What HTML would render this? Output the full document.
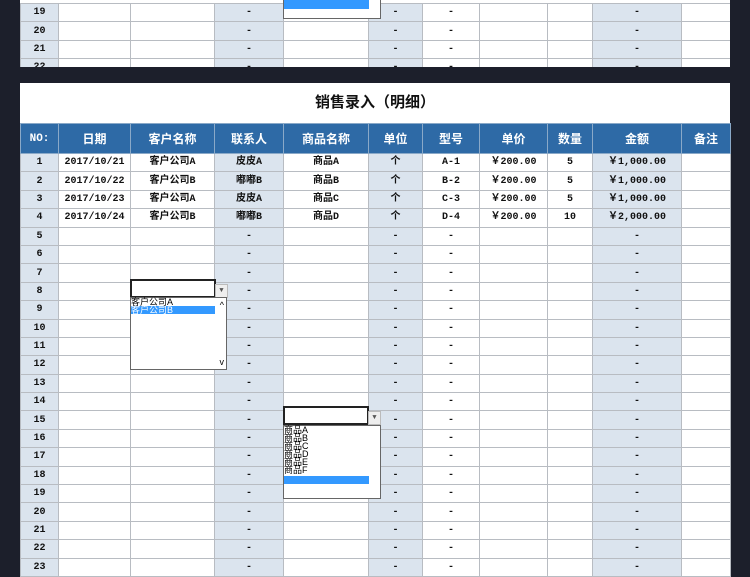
<!DOCTYPE html><html><head><meta charset="utf-8"><style>
body{margin:0;width:750px;height:563px;background:#1c1f2b;position:relative;overflow:hidden;font-family:"Liberation Mono","Noto Sans CJK SC",monospace;}
table{border-collapse:collapse;table-layout:fixed;position:absolute;left:20px;}
td{border:1px solid #b8bcc2;height:17.4px;padding:0;text-align:center;font-size:10px;font-weight:bold;color:#111;background:#fff;line-height:17px;white-space:nowrap;overflow:hidden}
td.b{background:#dbe4ee}
th{background:#2e6aa6;color:#fff;font-size:12px;font-weight:bold;height:27px;border:1px solid #8aa9c8;font-family:"Liberation Sans","Noto Sans CJK SC",sans-serif}
.p{position:absolute;left:20px;width:710px;background:#fff}
.dd{position:absolute;background:#fff;border:1px solid #666;font-family:"Liberation Sans","Noto Sans CJK SC",sans-serif;font-size:9px;line-height:8px}
.sel{position:absolute;border:2px solid #222;background:#fff}
.arr{position:absolute;width:11px;height:12px;background:#eee;border:1px solid #bbb;font-size:7px;text-align:center;color:#555;line-height:12px}
</style></head><body>
<div class="p" style="top:0;height:67px;overflow:hidden">
<table style="left:0;top:3px;width:710px">
<colgroup><col style="width:38px"><col style="width:72px"><col style="width:84px"><col style="width:69px"><col style="width:85px"><col style="width:54px"><col style="width:57px"><col style="width:68px"><col style="width:45px"><col style="width:89px"><col style="width:49px"></colgroup>
<tr><td class="b">19</td><td></td><td></td><td class="b">-</td><td></td><td class="b">-</td><td>-</td><td></td><td></td><td class="b">-</td><td></td></tr>
<tr><td class="b">20</td><td></td><td></td><td class="b">-</td><td></td><td class="b">-</td><td>-</td><td></td><td></td><td class="b">-</td><td></td></tr>
<tr><td class="b">21</td><td></td><td></td><td class="b">-</td><td></td><td class="b">-</td><td>-</td><td></td><td></td><td class="b">-</td><td></td></tr>
<tr><td class="b">22</td><td></td><td></td><td class="b">-</td><td></td><td class="b">-</td><td>-</td><td></td><td></td><td class="b">-</td><td></td></tr>
</table>
<div class="dd" style="left:263px;top:-2px;width:96px;height:19px"><div style="background:#3399ff;height:10px;width:85px"></div></div>
</div>
<div class="p" style="top:83px;height:480px">
<div style="position:absolute;top:8px;width:100%;text-align:center;font-size:15px;font-weight:bold;font-family:'Liberation Sans','Noto Sans CJK SC',sans-serif;color:#111">销售录入（明细）</div>
</div>
<table style="top:123px;width:710px">
<colgroup><col style="width:38px"><col style="width:72px"><col style="width:84px"><col style="width:69px"><col style="width:85px"><col style="width:54px"><col style="width:57px"><col style="width:68px"><col style="width:45px"><col style="width:89px"><col style="width:49px"></colgroup>
<tr><th style="font-family:'Liberation Mono',monospace;font-size:11px">NO:</th><th>日期</th><th>客户名称</th><th>联系人</th><th>商品名称</th><th>单位</th><th>型号</th><th>单价</th><th>数量</th><th>金额</th><th>备注</th></tr>
<tr><td class="b">1</td><td>2017/10/21</td><td>客户公司A</td><td class="b">皮皮A</td><td>商品A</td><td class="b">个</td><td>A-1</td><td>￥200.00</td><td>5</td><td class="b">￥1,000.00</td><td></td></tr>
<tr><td class="b">2</td><td>2017/10/22</td><td>客户公司B</td><td class="b">嘟嘟B</td><td>商品B</td><td class="b">个</td><td>B-2</td><td>￥200.00</td><td>5</td><td class="b">￥1,000.00</td><td></td></tr>
<tr><td class="b">3</td><td>2017/10/23</td><td>客户公司A</td><td class="b">皮皮A</td><td>商品C</td><td class="b">个</td><td>C-3</td><td>￥200.00</td><td>5</td><td class="b">￥1,000.00</td><td></td></tr>
<tr><td class="b">4</td><td>2017/10/24</td><td>客户公司B</td><td class="b">嘟嘟B</td><td>商品D</td><td class="b">个</td><td>D-4</td><td>￥200.00</td><td>10</td><td class="b">￥2,000.00</td><td></td></tr>
<tr><td class="b">5</td><td></td><td></td><td class="b">-</td><td></td><td class="b">-</td><td>-</td><td></td><td></td><td class="b">-</td><td></td></tr>
<tr><td class="b">6</td><td></td><td></td><td class="b">-</td><td></td><td class="b">-</td><td>-</td><td></td><td></td><td class="b">-</td><td></td></tr>
<tr><td class="b">7</td><td></td><td></td><td class="b">-</td><td></td><td class="b">-</td><td>-</td><td></td><td></td><td class="b">-</td><td></td></tr>
<tr><td class="b">8</td><td></td><td></td><td class="b">-</td><td></td><td class="b">-</td><td>-</td><td></td><td></td><td class="b">-</td><td></td></tr>
<tr><td class="b">9</td><td></td><td></td><td class="b">-</td><td></td><td class="b">-</td><td>-</td><td></td><td></td><td class="b">-</td><td></td></tr>
<tr><td class="b">10</td><td></td><td></td><td class="b">-</td><td></td><td class="b">-</td><td>-</td><td></td><td></td><td class="b">-</td><td></td></tr>
<tr><td class="b">11</td><td></td><td></td><td class="b">-</td><td></td><td class="b">-</td><td>-</td><td></td><td></td><td class="b">-</td><td></td></tr>
<tr><td class="b">12</td><td></td><td></td><td class="b">-</td><td></td><td class="b">-</td><td>-</td><td></td><td></td><td class="b">-</td><td></td></tr>
<tr><td class="b">13</td><td></td><td></td><td class="b">-</td><td></td><td class="b">-</td><td>-</td><td></td><td></td><td class="b">-</td><td></td></tr>
<tr><td class="b">14</td><td></td><td></td><td class="b">-</td><td></td><td class="b">-</td><td>-</td><td></td><td></td><td class="b">-</td><td></td></tr>
<tr><td class="b">15</td><td></td><td></td><td class="b">-</td><td></td><td class="b">-</td><td>-</td><td></td><td></td><td class="b">-</td><td></td></tr>
<tr><td class="b">16</td><td></td><td></td><td class="b">-</td><td></td><td class="b">-</td><td>-</td><td></td><td></td><td class="b">-</td><td></td></tr>
<tr><td class="b">17</td><td></td><td></td><td class="b">-</td><td></td><td class="b">-</td><td>-</td><td></td><td></td><td class="b">-</td><td></td></tr>
<tr><td class="b">18</td><td></td><td></td><td class="b">-</td><td></td><td class="b">-</td><td>-</td><td></td><td></td><td class="b">-</td><td></td></tr>
<tr><td class="b">19</td><td></td><td></td><td class="b">-</td><td></td><td class="b">-</td><td>-</td><td></td><td></td><td class="b">-</td><td></td></tr>
<tr><td class="b">20</td><td></td><td></td><td class="b">-</td><td></td><td class="b">-</td><td>-</td><td></td><td></td><td class="b">-</td><td></td></tr>
<tr><td class="b">21</td><td></td><td></td><td class="b">-</td><td></td><td class="b">-</td><td>-</td><td></td><td></td><td class="b">-</td><td></td></tr>
<tr><td class="b">22</td><td></td><td></td><td class="b">-</td><td></td><td class="b">-</td><td>-</td><td></td><td></td><td class="b">-</td><td></td></tr>
<tr><td class="b">23</td><td></td><td></td><td class="b">-</td><td></td><td class="b">-</td><td>-</td><td></td><td></td><td class="b">-</td><td></td></tr>
</table>
<div class="sel" style="left:130px;top:279px;width:82px;height:15px"></div>
<div class="arr" style="left:215px;top:284px">▼</div>
<div class="dd" style="left:130px;top:297px;width:95px;height:71px"><div>客户公司A</div><div style="background:#3399ff;color:#fff;width:84px">客户公司B</div><div style="position:absolute;right:2px;top:3px">^</div><div style="position:absolute;right:2px;bottom:3px">v</div></div>
<div class="sel" style="left:283px;top:406px;width:82px;height:15px"></div>
<div class="arr" style="left:368px;top:411px">▼</div>
<div class="dd" style="left:283px;top:425px;width:96px;height:72px;line-height:8px"><div>商品A</div><div>商品B</div><div>商品C</div><div>商品D</div><div>商品E</div><div>商品F</div><div style="background:#3399ff;height:8px;width:85px;margin-top:2px"></div></div>
</body></html>
